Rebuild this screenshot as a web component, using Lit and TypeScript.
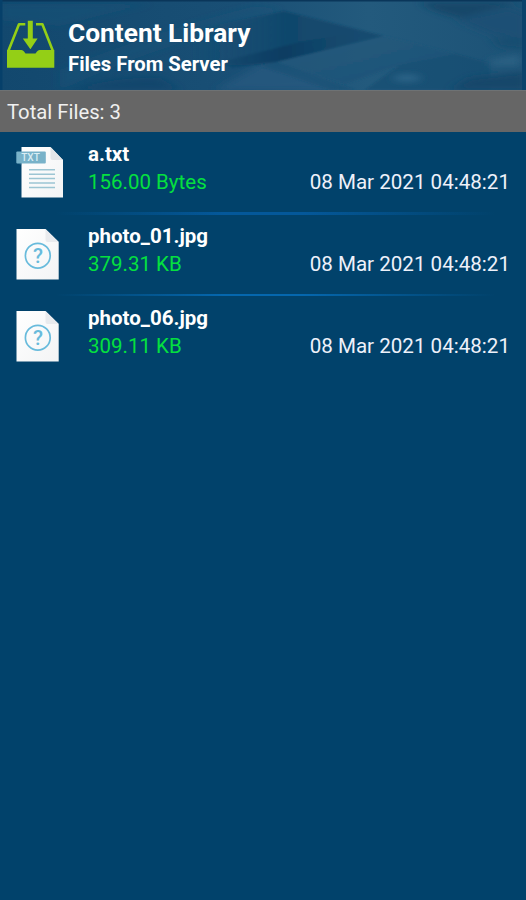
import { LitElement, html, svg, css } from "lit";
import { customElement, property } from "lit/decorators.js";

interface FileEntry {
  name: string;
  size: string;
  date: string;
  kind: "txt" | "unknown";
}

const FILES: FileEntry[] = [
  { name: "a.txt", size: "156.00 Bytes", date: "08 Mar 2021 04:48:21", kind: "txt" },
  { name: "photo_01.jpg", size: "379.31 KB", date: "08 Mar 2021 04:48:21", kind: "unknown" },
  { name: "photo_06.jpg", size: "309.11 KB", date: "08 Mar 2021 04:48:21", kind: "unknown" },
];

@customElement("file-icon")
class FileIcon extends LitElement {
  @property() kind = "unknown";
  static styles = css`
    :host { display: block; width: 52px; height: 54px; }
    svg { display: block; }
    text { font-family: Roboto, sans-serif; }
    .tag { font-size: 10px; font-weight: 500; fill: #d9edf4; }
    .mark { font-size: 20.5px; font-weight: 500; fill: #68bbdc; }
  `;
  render() {
    return html`<svg width="52" height="54" viewBox="0 0 52 54">
      <defs>
        <linearGradient id="paper" x1="0" y1="0" x2="1" y2="1">
          <stop offset="0" stop-color="#ffffff" /><stop offset="1" stop-color="#f3f4f5" />
        </linearGradient>
      </defs>
      ${this.kind === "txt"
        ? svg`
          <path d="M5.5 1H34.5L47 14V51.5H5.5Z" fill="url(#paper)" />
          <path d="M34.5 1V12Q34.5 14 36.5 14H47Z" fill="#e2e6e9" />
          <rect x="0.3" y="5.5" width="29.5" height="12" rx="1" fill="#78b2c9" />
          <path d="M0.5 17.5H5.5V18.5Z" fill="#4c8ba7" />
          <text class="tag" x="5.2" y="15" textLength="18.6" lengthAdjust="spacingAndGlyphs">TXT</text>
          <path d="M13 23.7H39M13 28.2H39M13 32.5H39M13 36.9H39M13 41.5H39" stroke="#9cc5d3" stroke-width="1.5" />`
        : svg`
          <path d="M0.5 1H29.5L42.7 14V51.5H0.5Z" fill="url(#paper)" />
          <path d="M29.5 1V12Q29.5 14 31.5 14H42.7Z" fill="#e9ebee" />
          <circle cx="21.8" cy="27.7" r="12.4" fill="none" stroke="#68bbdc" stroke-width="1.7" />
          <text class="mark" x="21.9" y="35.1" text-anchor="middle">?</text>`}
    </svg>`;
  }
}

@customElement("file-row")
class FileRow extends LitElement {
  @property({ attribute: false }) file!: FileEntry;
  static styles = css`
    :host { display: flex; height: 82px; box-sizing: border-box; padding: 14px 16px 0 16px; }
    .body { flex: 1; margin-left: 20px; min-width: 0; font-size: 20.5px; white-space: nowrap; }
    .name { color: #fff; font-weight: 700; line-height: 17px; height: 27px; }
    .meta { display: flex; justify-content: space-between; line-height: 18px; }
    .size { color: #05e03f; }
    .date { color: #eef1fa; font-size: 20.6px; }
  `;
  render() {
    return html`
      <file-icon kind=${this.file.kind}></file-icon>
      <div class="body">
        <div class="name">${this.file.name}</div>
        <div class="meta">
          <span class="size">${this.file.size}</span>
          <span class="date">${this.file.date}</span>
        </div>
      </div>`;
  }
}

@customElement("app-root")
class AppRoot extends LitElement {
  static styles = css`
    :host { display: block; height: 900px; background: #01426b; font-family: Roboto, sans-serif; overflow: hidden; }
    header { position: relative; height: 90px; display: flex; overflow: hidden; }
    .backdrop { position: absolute; inset: 0; }
    .logo { position: relative; margin: 18px 0 0 5px; width: 52px; height: 52px; }
    .titles { position: relative; margin: 17px 0 0 11px; color: #fff; font-weight: 700; white-space: nowrap; }
    h1 { margin: 0; font-size: 26.3px; line-height: 32px; font-weight: 700; }
    h2 { margin: 0; font-size: 20.3px; line-height: 30px; font-weight: 700; }
    .total { height: 42px; box-sizing: border-box; padding-left: 7px; background: #666; border-top: 1px solid #6e7274;
      color: #f0f0f0; font-size: 20.3px; line-height: 42px; }
    .line { height: 3px; margin: -3px 16px 0; position: relative; top: 0.5px;
      background: linear-gradient(90deg, transparent 8%, #04589a 42%, #04589a 58%, transparent 97%); }
    .thin { height: 2px; margin-top: -2px; top: 0;
      background: linear-gradient(90deg, transparent 8%, #0567ae 42%, #0567ae 58%, transparent 97%); }
  `;
  render() {
    return html`
      <header>
        <svg class="backdrop" width="526" height="90" viewBox="0 0 526 90" preserveAspectRatio="none">
          <defs>
            <linearGradient id="sky" x1="0" x2="1" y1="0" y2="0">
              <stop offset="0" stop-color="#12486e" /><stop offset=".45" stop-color="#194f75" />
              <stop offset=".7" stop-color="#235a7d" /><stop offset="1" stop-color="#1c5276" />
            </linearGradient>
            <linearGradient id="wedge" x1="0" x2="1" y1="0" y2="0">
              <stop offset="0" stop-color="#134a6f" stop-opacity="0" /><stop offset=".5" stop-color="#11476c" />
              <stop offset="1" stop-color="#174c70" />
            </linearGradient>
            <linearGradient id="fold" x1="0" x2="1" y1="0" y2="0">
              <stop offset="0" stop-color="#0c4166" stop-opacity=".3" /><stop offset=".4" stop-color="#0a3d62" />
              <stop offset="1" stop-color="#1b5074" stop-opacity=".2" />
            </linearGradient>
            <linearGradient id="lower" x1="0" x2="1" y1="0" y2="1">
              <stop offset="0" stop-color="#235a7e" /><stop offset="1" stop-color="#1b5074" />
            </linearGradient>
            <filter id="soft" x="-10%" y="-30%" width="120%" height="160%"><feGaussianBlur stdDeviation="5 3" /></filter>
            <filter id="crisp" x="-10%" y="-30%" width="120%" height="160%"><feGaussianBlur stdDeviation="1" /></filter>
          </defs>
          <rect width="526" height="90" fill="url(#sky)" />
          <g filter="url(#soft)">
            <path d="M60 26Q110 12 150 4H0V20Z" fill="#1b5277" opacity=".5" />
            <path d="M60 70Q160 30 256 6L280 10L250 24Q160 44 60 90Z" fill="#1d547a" opacity=".45" />
            <path d="M70 90Q120 76 160 78L180 90Z" fill="#0f456b" opacity=".8" />
            <path d="M215 90L262 64L310 74L340 90Z" fill="#25597e" opacity=".8" />
          </g>
          <g filter="url(#crisp)">
            <path d="M190 30L284 11L384 36L276 62L190 68Z" fill="url(#wedge)" />
            <path d="M220 62L300 42L345 34L384 36L276 62L232 68Z" fill="url(#fold)" />
            <path d="M276 62L384 36L456 54L400 65L345 84Z" fill="url(#lower)" opacity=".7" />
            <path d="M400 65L456 54L490 63V90H365Z" fill="#164b6f" opacity=".6" />
            <path d="M276 62L356 90H330L260 66Z" fill="#1b5074" opacity=".5" />
          </g>
          <g filter="url(#soft)">
            <path d="M420 2H520L462 18Q432 12 420 2Z" fill="#134769" />
            <path d="M456 20L510 8L526 14V40L490 34Z" fill="#1a5074" />
            <path d="M490 38H526V50L500 47Z" fill="#194d71" />
            <path d="M470 78L526 72V90H450Z" fill="#14476b" />
            <ellipse cx="407" cy="78" rx="14" ry="3" fill="#31698d" />
            <path d="M490 60L520 54V66H490Z" fill="#296083" />
          </g>
          <path d="M0 0H526V1.5H0Z" fill="#0a365a" />
          <path d="M0 0H2.5V90H0Z" fill="#06406a" />
          <path d="M522 0H526V90H522Z" fill="#0b426b" />
        </svg>
        <svg class="logo" viewBox="0 0 52 52">
          <path d="M20.3 6.3H14L3.3 33M31 6.3H37.4L47.9 33" fill="none" stroke="#94cf16" stroke-width="2.6" stroke-linejoin="round" />
          <path d="M2 32H16.5Q18 32 19 33.5L20.5 35.5H30.5L32 33.5Q33 32 34.5 32H49.3V49.7H2Z" fill="#94cf16" />
          <path d="M22.8 2.7H27.8V20.5H32.6L25.6 31H25.2L17.8 20.5H22.8Z" fill="#94cf16" />
        </svg>
        <div class="titles"><h1>Content Library</h1><h2>Files From Server</h2></div>
      </header>
      <div class="total">Total Files: 3</div>
      <main>
        ${FILES.map((f, i) => html`
          <file-row .file=${f}></file-row>
          ${i < FILES.length - 1 ? html`<div class="line ${i ? "thin" : ""}"></div>` : null}`)}
      </main>`;
  }
}
